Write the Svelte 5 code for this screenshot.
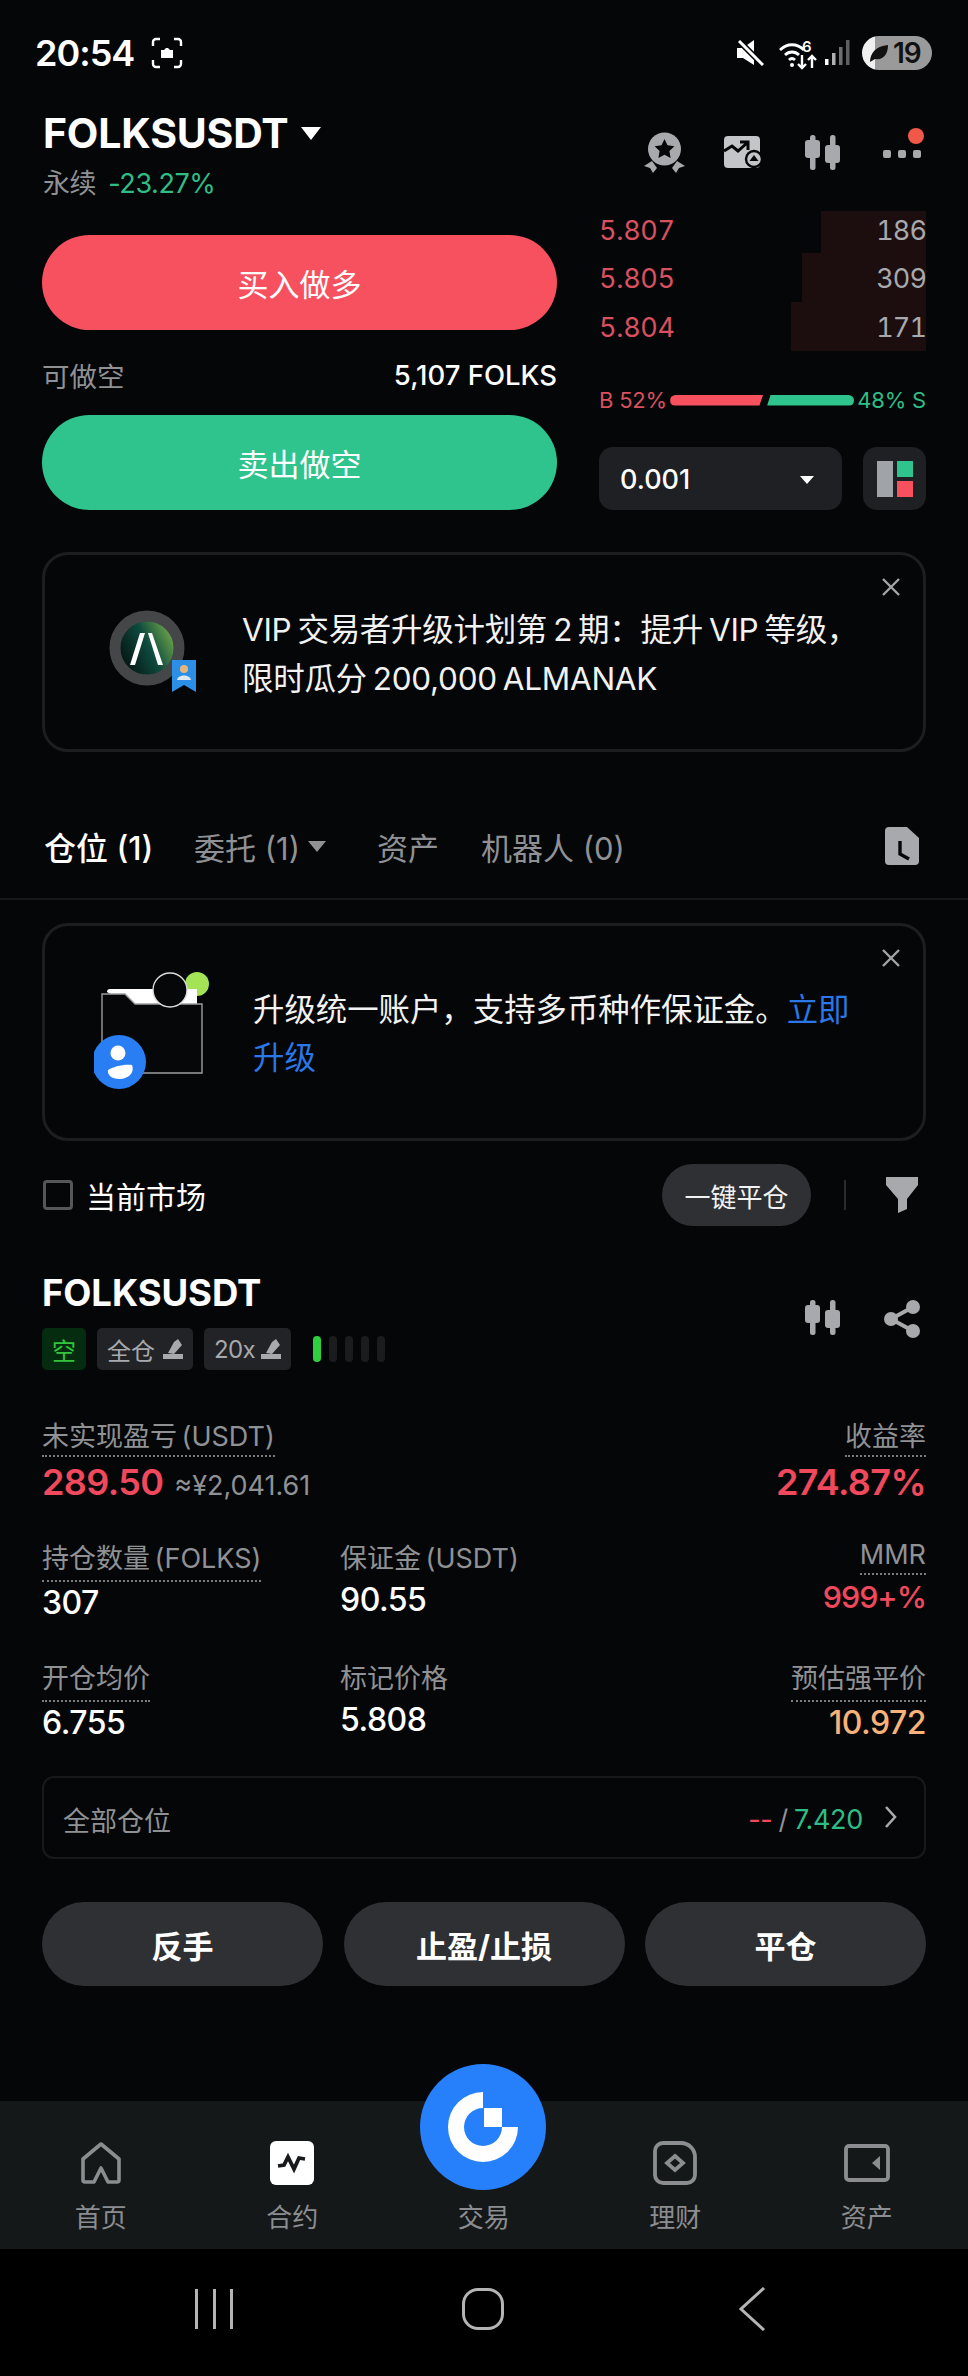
<script>
	const asks = [
		{ price: '5.807', qty: 186, width: 105 },
		{ price: '5.805', qty: 309, width: 124 },
		{ price: '5.804', qty: 171, width: 135 }
	];
	const tabs = [
		{ label: '委托 (1)', caret: true, width: 183 },
		{ label: '资产', width: 104 },
		{ label: '机器人 (0)', width: 170 }
	];
	const navItems = ['首页', '合约', '交易', '理财', '资产'];
</script>

<div class="phone">
	<div class="status">
		<span class="time">20:54</span>
		<svg viewBox="0 0 32 32" width="32" height="32" fill="none" stroke="#fff" stroke-width="2.4">
			<path d="M2 9V5a3 3 0 0 1 3-3h4M23 2h4a3 3 0 0 1 3 3v4M30 23v4a3 3 0 0 1-3 3h-4M9 30H5a3 3 0 0 1-3-3v-4" />
			<path d="M10 13h3l2-2h2l2 2h3v8H10z" fill="#fff" stroke="none" />
		</svg>
		<div class="status-right">
			<svg class="st-mute" viewBox="0 0 28 26" width="28" height="26" fill="#fff">
				<path d="M0 8h6l11-8v25L6 18H0z" />
				<path d="M2 1l24 24" stroke="#050607" stroke-width="6" />
				<path d="M2 1l24 24" stroke="#fff" stroke-width="3" />
			</svg>
			<svg class="st-wifi" viewBox="0 0 38 36" width="38" height="36" fill="none" stroke="#fff" stroke-width="2.8">
				<path d="M1 15c7-7 17-7 24 0M6 20c4-4 10-4 14 0M10 25c2-2 4-2 6 0" />
				<circle cx="13" cy="30" r="2" fill="#fff" stroke="none" />
				<path d="M23 20v13M19 29l4 4 4-4M33 33V21M29 25l4-4 4 4" stroke-width="2.4" />
				<text x="23" y="17" fill="#fff" stroke="none" font-size="15" font-weight="600" font-family="Inter, sans-serif">6</text>
			</svg>
			<svg viewBox="0 0 26 26" width="26" height="26">
				<rect x="0" y="19" width="3.5" height="6" fill="#fff" />
				<rect x="7" y="13" width="3.5" height="12" fill="#b0b0b0" />
				<rect x="14" y="7" width="3.5" height="18" fill="#6f6f6f" />
				<rect x="21" y="0" width="3.5" height="25" fill="#5f5f5f" />
			</svg>
			<div class="battery">
				<svg viewBox="0 0 20 20" width="20" height="20" fill="#111"><path d="M1 19c0-9 6-16 18-17 0 10-5 15-13 14z" /></svg>
				<span class="battery-num">19</span>
			</div>
		</div>
	</div>

	<div class="header">
		<div>
			<div class="pair">
				<span>FOLKSUSDT</span>
				<i class="caret caret--title"></i>
			</div>
			<div class="pair-sub">
				<span class="muted">永续</span>
				<span class="green">-23.27%</span>
			</div>
		</div>
		<div class="header-icons">
			<svg viewBox="0 0 41 41" width="41" height="41" fill="#a7a9ac">
				<circle cx="20.5" cy="17" r="16.5" />
				<path d="M20.5 7l3 6.3 6.9 1-5 4.8 1.2 6.9-6.1-3.3-6.1 3.3 1.2-6.9-5-4.8 6.9-1z" fill="#060708" />
				<path d="M0 34l8-5 5 7-4 5-3-5zM41 34l-8-5-5 7 4 5 3-5z" />
			</svg>
			<svg viewBox="0 0 39 32" width="39" height="32">
				<rect x="0" y="0" width="36" height="32" rx="4" fill="#c3c5c8" />
				<path d="M0 15l8-5 6 5 9-8M16 6h8v8" fill="none" stroke="#060708" stroke-width="3" />
				<circle cx="30" cy="23" r="8" fill="#c3c5c8" stroke="#060708" stroke-width="2.4" />
				<path d="M30 19l4.5 6h-9z" fill="#060708" />
			</svg>
			<svg viewBox="0 0 35 35" width="35" height="35" fill="#a7a9ac">
				<rect x="5" y="0" width="5.5" height="35" rx="2.5" />
				<rect x="25" y="0" width="5.5" height="35" rx="2.5" />
				<rect x="0" y="5" width="15" height="18" rx="3" />
				<rect x="20" y="10" width="15" height="18" rx="3" />
			</svg>
			<div class="more">
				<i></i><i></i><i></i>
				<b></b>
			</div>
		</div>
	</div>

	<div class="trade">
		<div class="trade-left">
			<button class="action action--buy">买入做多</button>
			<div class="avail">
				<span class="muted">可做空</span>
				<span class="avail-val">5,107 FOLKS</span>
			</div>
			<button class="action action--sell">卖出做空</button>
		</div>
		<div class="trade-right">
			<div class="book">
				{#each asks as ask}
					<div class="ask">
						<span class="ask-bar" style="width: {ask.width}px"></span>
						<span class="ask-price">{ask.price}</span>
						<span class="ask-qty">{ask.qty}</span>
					</div>
				{/each}
			</div>
			<div class="ratio">
				<span class="ratio-red">B 52%</span>
				<div class="ratio-bar">
					<i class="ratio-b"></i>
					<i class="ratio-s"></i>
				</div>
				<span class="green">48% S</span>
			</div>
			<div class="controls">
				<div class="select">
					<span>0.001</span>
					<i class="caret caret--small"></i>
				</div>
				<div class="layout-btn">
					<span class="lay-a"></span>
					<span class="lay-b"></span>
					<span class="lay-c"></span>
				</div>
			</div>
		</div>
	</div>

	<div class="banner banner--vip">
		<svg class="close" viewBox="0 0 18 18" width="18" height="18" stroke="#a2a4a7" stroke-width="2.4">
			<path d="M1 1l16 16M17 1L1 17" />
		</svg>
		<svg class="vip-icon" viewBox="0 0 90 82" width="90" height="82">
			<defs>
				<linearGradient id="coin" x1="0" y1="0.8" x2="1" y2="0.3">
					<stop offset="0" stop-color="#020806" />
					<stop offset="0.55" stop-color="#0e4a3e" />
					<stop offset="1" stop-color="#7fb54c" />
				</linearGradient>
			</defs>
			<circle cx="39" cy="38" r="32" fill="url(#coin)" stroke="#444648" stroke-width="11" />
			<path d="M32 23h5l-10 32h-5zM40 23h4l11 32h-5z" fill="#fff" />
			<path d="M64 50h24v32l-12-7-12 7z" fill="#2c8fe6" />
			<circle cx="76" cy="59" r="4" fill="#e8b47a" />
			<path d="M69 70c1-6 13-6 14 0z" fill="#dde8ef" />
		</svg>
		<p class="banner-text">VIP 交易者升级计划第 2 期：提升 VIP 等级，<br />限时瓜分 200,000 ALMANAK</p>
	</div>

	<div class="tabs">
		<span class="tab tab--on">仓位 (1)</span>
		{#each tabs as tab}
			<span class="tab" style="width: {tab.width}px">
				{tab.label}
				{#if tab.caret}<i class="caret caret--tab"></i>{/if}
			</span>
		{/each}
		<svg class="history" viewBox="0 0 34 38" width="34" height="38">
			<path d="M4 0h18l12 11v23a4 4 0 0 1-4 4H4a4 4 0 0 1-4-4V4a4 4 0 0 1 4-4z" fill="#a7a9ac" />
			<path d="M15 14v13l9 5" fill="none" stroke="#060708" stroke-width="3.4" />
		</svg>
	</div>

	<div class="banner banner--upgrade">
		<svg class="close" viewBox="0 0 18 18" width="18" height="18" stroke="#a2a4a7" stroke-width="2.4">
			<path d="M1 1l16 16M17 1L1 17" />
		</svg>
		<svg class="folder" viewBox="0 0 116 118" width="116" height="118">
			<circle cx="103" cy="12" r="12" fill="#a4e356" />
			<path d="M13 20a3 3 0 0 1 3-3h87v20H40z" fill="#fff" />
			<path d="M8 22h23l10 10h67v69H8z" fill="#060708" stroke="#9c9ea0" stroke-width="1.4" />
			<circle cx="76" cy="18" r="17" fill="#060708" stroke="#dcdcdc" stroke-width="1.4" />
			<circle cx="25" cy="90" r="27" fill="#2a7ef4" />
			<circle cx="24" cy="81" r="7.5" fill="#fff" />
			<path d="M14 98c5-3 15-6 24-5 3 8-4 14-13 14-7 0-12-4-11-9z" fill="#fff" />
		</svg>
		<p class="banner-text banner-text--upgrade">升级统一账户，支持多币种作保证金。<span class="link">立即</span><span class="link">升级</span></p>
	</div>

	<div class="filter">
		<label class="check">
			<i></i>
			<span>当前市场</span>
		</label>
		<button class="close-all">一键平仓</button>
		<i class="vline"></i>
		<svg viewBox="0 0 32 36" width="32" height="36" fill="#a7a9ac">
			<path d="M0 0h32v8L21 22v10l-9 4V22L0 8z" />
		</svg>
	</div>

	<div class="position">
		<div class="pos-head">
			<div>
				<div class="pos-title">FOLKSUSDT</div>
				<div class="tags">
					<span class="tag tag--short">空</span>
					<span class="tag">全仓
						<svg viewBox="0 0 20 20" width="20" height="20" fill="#a7a9ac"><path d="M11 3l4-3 4 6-8 9-6-1zM0 15h20v5H0z" /></svg>
					</span>
					<span class="tag tag--lev">20x
						<svg viewBox="0 0 20 20" width="20" height="20" fill="#a7a9ac"><path d="M11 3l4-3 4 6-8 9-6-1zM0 15h20v5H0z" /></svg>
					</span>
					<span class="risk">
						<i class="risk-on"></i><i></i><i></i><i></i><i></i>
					</span>
				</div>
			</div>
			<div class="pos-icons">
				<svg viewBox="0 0 35 35" width="35" height="35" fill="#a7a9ac">
					<rect x="5" y="0" width="5.5" height="35" rx="2.5" />
					<rect x="25" y="0" width="5.5" height="35" rx="2.5" />
					<rect x="0" y="5" width="15" height="18" rx="3" />
					<rect x="20" y="10" width="15" height="18" rx="3" />
				</svg>
				<svg viewBox="0 0 36 38" width="36" height="38" fill="#a7a9ac">
					<circle cx="29" cy="7" r="7" />
					<circle cx="7" cy="19" r="7" />
					<circle cx="29" cy="31" r="7" />
					<path d="M7 19L29 7M7 19l22 12" stroke="#a7a9ac" stroke-width="4" />
				</svg>
			</div>
		</div>

		<div class="pnl">
			<div>
				<span class="label label--dot">未实现盈亏 (USDT)</span>
				<div class="pnl-val"><b class="big red">289.50</b> <span class="approx">≈¥2,041.61</span></div>
			</div>
			<div class="right">
				<span class="label label--dot">收益率</span>
				<div class="pnl-val"><b class="big red">274.87%</b></div>
			</div>
		</div>

		<div class="stats">
			<div class="stat">
				<span class="label label--dot">持仓数量 (FOLKS)</span>
				<span class="val">307</span>
			</div>
			<div class="stat">
				<span class="label">保证金 (USDT)</span>
				<span class="val val--plain">90.55</span>
			</div>
			<div class="stat right stat--mmr">
				<span class="label label--dot">MMR</span>
				<span class="val val--mmr red">999+%</span>
			</div>
			<div class="stat">
				<span class="label label--dot">开仓均价</span>
				<span class="val">6.755</span>
			</div>
			<div class="stat">
				<span class="label">标记价格</span>
				<span class="val val--plain">5.808</span>
			</div>
			<div class="stat right">
				<span class="label label--dot">预估强平价</span>
				<span class="val orange">10.972</span>
			</div>
		</div>

		<div class="all-pos">
			<span class="muted">全部仓位</span>
			<span class="all-right">
				<span class="red">--</span> <span class="muted">/</span> <span class="green">7.420</span>
				<svg viewBox="0 0 14 22" width="14" height="22" fill="none" stroke="#a7a9ac" stroke-width="2.6"><path d="M2 1l9 10-9 10" /></svg>
			</span>
		</div>

		<div class="pos-actions">
			<button>反手</button>
			<button>止盈/止损</button>
			<button>平仓</button>
		</div>
	</div>

	<div class="nav">
		<button class="fab" aria-label="交易">
			<svg viewBox="0 0 70 70" width="70" height="70" fill="#fff">
				<path d="M35 0A35 35 0 1 0 70 35H54A19 19 0 1 1 35 16z" />
				<path d="M36 16h18v19H36z" />
			</svg>
		</button>
		{#each navItems as item, i}
			<div class="nav-item">
				<div class="nav-icon">
					{#if i === 0}
						<svg viewBox="0 0 44 44" width="44" height="44" fill="none" stroke="#8b8d90" stroke-width="3.6">
							<path d="M22 3L4 18v21a2 2 0 0 0 2 2h9l7-14 7 14h9a2 2 0 0 0 2-2V18z" stroke-linejoin="round" />
						</svg>
					{:else if i === 1}
						<svg viewBox="0 0 44 44" width="44" height="44">
							<rect x="0" y="0" width="44" height="44" rx="6" fill="#fff" />
							<path d="M8 25l6-1 4-8 6 12 5-11 6 1" fill="none" stroke="#17191b" stroke-width="3.8" />
						</svg>
					{:else if i === 3}
						<svg viewBox="0 0 44 44" width="44" height="44" fill="none" stroke="#8b8d90" stroke-width="3.8">
							<path d="M10 2h18a14 14 0 0 1 14 14v18a8 8 0 0 1-8 8H10a8 8 0 0 1-8-8V10a8 8 0 0 1 8-8z" />
							<path d="M22 15l8 7-8 7-8-7z" />
						</svg>
					{:else if i === 4}
						<svg viewBox="0 0 46 38" width="46" height="38" fill="none" stroke="#8b8d90" stroke-width="3.8">
							<rect x="2" y="2" width="42" height="34" rx="3" />
							<path d="M36 12l-8 7 8 7z" fill="#8b8d90" stroke="none" />
						</svg>
					{/if}
				</div>
				<span>{item}</span>
			</div>
		{/each}
	</div>

	<div class="sysnav">
		<div class="sys-lines"><i></i><i></i><i></i></div>
		<i class="sys-home"></i>
		<svg class="sys-back" viewBox="0 0 28 44" width="28" height="44" fill="none" stroke="#b4b4b4" stroke-width="3"><path d="M25 1L2 22l23 21" /></svg>
	</div>
</div>

<style>
	:global(body) {
		margin: 0;
		background: #050607;
	}

	.phone {
		width: 968px;
		height: 2376px;
		position: relative;
		display: flex;
		flex-direction: column;
		overflow: hidden;
		background: #050607;
		color: #fff;
		font-family: Inter, 'Noto Sans CJK SC', sans-serif;
		font-size: 28px;
	}

	button {
		border: 0;
		font-family: inherit;
		color: inherit;
		padding: 0;
	}

	i {
		display: block;
		font-style: normal;
	}

	.muted { color: #8f9194; }
	.green { color: #2fbd85; }
	.red { color: #f0485c; }
	.orange { color: #f7b27a; }
	.right { text-align: right; align-items: flex-end; }

	.caret {
		width: 0;
		height: 0;
		border-left: 10px solid transparent;
		border-right: 10px solid transparent;
		border-top: 13px solid #fff;
	}

	/* status bar */
	.status {
		height: 106px;
		flex: none;
		display: flex;
		align-items: center;
		padding: 0 36px 0 35px;
		box-sizing: border-box;
	}

	.time {
		font-size: 36px;
		font-weight: 600;
		letter-spacing: -1px;
		margin-right: 17px;
	}

	.status-right {
		margin-left: auto;
		display: flex;
		align-items: center;
		gap: 8px;
	}

	.st-wifi { margin-left: 6px; }

	.battery {
		width: 70px;
		height: 34px;
		border-radius: 17px;
		background: linear-gradient(90deg, #f0f0f0 13px, #9a9a9a 13px);
		display: flex;
		align-items: center;
		padding-left: 7px;
		box-sizing: border-box;
		margin-left: 3px;
	}

	.battery-num {
		color: #111;
		font-size: 28px;
		font-weight: 600;
		margin-left: 4px;
		letter-spacing: -1px;
	}

	/* header */
	.header {
		height: 102px;
		flex: none;
		display: flex;
		justify-content: space-between;
		padding: 3px 47px 0 43px;
		box-sizing: border-box;
	}

	.pair {
		display: flex;
		align-items: center;
		gap: 12px;
		font-size: 41px;
		font-weight: 700;
		letter-spacing: -0.2px;
		line-height: 48px;
	}

	.pair-sub {
		display: flex;
		gap: 12px;
		font-size: 27px;
		letter-spacing: -0.4px;
		line-height: 42px;
		margin-top: 6px;
	}

	.header-icons {
		display: flex;
		align-items: center;
		height: 86px;
	}

	.header-icons > :global(svg:nth-child(1)) { margin-right: 39px; }
	.header-icons > :global(svg:nth-child(2)) { margin-right: 42px; }
	.header-icons > :global(svg:nth-child(3)) { margin-right: 43px; }

	.more {
		display: flex;
		gap: 7px;
		position: relative;
		padding-top: 4px;
	}

	.more i {
		width: 8px;
		height: 8px;
		border-radius: 2px;
		background: #a7a9ac;
	}

	.more b {
		position: absolute;
		right: -3px;
		top: -18px;
		width: 16px;
		height: 16px;
		border-radius: 50%;
		background: #f0584a;
	}

	/* trade panel */
	.trade {
		flex: none;
		display: flex;
		justify-content: space-between;
		padding: 3px 42px 0;
		height: 344px;
		box-sizing: border-box;
	}

	.trade-left {
		width: 515px;
		padding-top: 24px;
		box-sizing: border-box;
	}

	.action {
		display: block;
		width: 100%;
		height: 95px;
		border-radius: 48px;
		font-size: 31px;
		color: #fff;
	}

	.action--buy { background: #f7505f; }
	.action--sell { background: #2fc48d; }

	.avail {
		height: 85px;
		display: flex;
		align-items: center;
		justify-content: space-between;
		padding-top: 4px;
		box-sizing: border-box;
		font-size: 27.5px;
	}

	.avail-val { font-weight: 500; }

	.trade-right {
		width: 327px;
	}

	.book {
		height: 140px;
	}

	.ask {
		position: relative;
		display: flex;
		align-items: center;
		justify-content: space-between;
		height: 49px;
		padding-top: 2px;
		box-sizing: border-box;
		font-size: 27px;
		font-variant-numeric: tabular-nums;
		letter-spacing: -0.3px;
	}

	.ask:first-child {
		height: 42px;
		padding: 0 0 4px;
	}

	.ask-bar {
		position: absolute;
		right: 0;
		top: 0;
		bottom: 0;
		background: #1c0e0e;
	}

	.ask-price {
		position: relative;
		color: #d9505f;
	}

	.ask-qty {
		position: relative;
		color: #a7a9ac;
		letter-spacing: -0.9px;
	}

	.ratio {
		display: flex;
		align-items: center;
		justify-content: space-between;
		height: 28px;
		margin-top: 35px;
		font-size: 22px;
		letter-spacing: -0.2px;
	}

	.ratio-red { color: #d9505f; }

	.ratio-bar {
		width: 184px;
		height: 11px;
		display: flex;
		gap: 4px;
	}

	.ratio-b {
		flex: 1.07;
		background: #f7505f;
		border-radius: 6px 0 0 6px;
		clip-path: polygon(0 0, 100% 0, 96% 100%, 0 100%);
	}

	.ratio-s {
		flex: 1;
		background: #2fc48d;
		border-radius: 0 6px 6px 0;
		clip-path: polygon(4% 0, 100% 0, 100% 100%, 0 100%);
	}

	.controls {
		display: flex;
		justify-content: space-between;
		margin-top: 33px;
	}

	.select {
		width: 243px;
		height: 63px;
		border-radius: 14px;
		background: #1e2023;
		display: flex;
		align-items: center;
		justify-content: space-between;
		padding: 2px 28px 0 21px;
		box-sizing: border-box;
		font-size: 27px;
		font-weight: 500;
	}

	.caret--small {
		border-left-width: 7px;
		border-right-width: 7px;
		border-top-width: 8px;
	}

	.layout-btn {
		width: 63px;
		height: 63px;
		border-radius: 14px;
		background: #1e2023;
		display: grid;
		grid-template-columns: 16px 16px;
		grid-template-rows: 16px 16px;
		gap: 4px;
		align-content: center;
		justify-content: center;
	}

	.lay-a { grid-row: 1 / 3; background: #a0a3a8; }
	.lay-b { background: #2fc48d; }
	.lay-c { background: #f7505f; }

	/* banners */
	.banner {
		flex: none;
		position: relative;
		display: flex;
		margin: 0 42px;
		border: 3px solid #1c1e20;
		border-radius: 26px;
		box-sizing: border-box;
	}

	.banner--vip {
		height: 200px;
		padding: 50px 0 0 63px;
	}

	.banner--upgrade {
		height: 218px;
		padding: 46px 0 0 49px;
	}

	.close {
		position: absolute;
		right: 23px;
		top: 23px;
	}

	.vip-icon {
		flex: none;
		margin-top: 5px;
	}

	.banner-text {
		margin: 0 0 0 44px;
		color: #f2f2f2;
		font-size: 31.5px;
		letter-spacing: -0.3px;
		word-spacing: -2.5px;
		line-height: 49px;
	}

	.banner-text--upgrade {
		margin: 14px 0 0 43px;
		width: 610px;
		font-size: 31.4px;
		letter-spacing: 0;
		line-height: 48px;
	}

	.folder { flex: none; }

	.link { color: #2a77e8; }

	/* tabs */
	.tabs {
		flex: none;
		height: 148px;
		margin-bottom: 23px;
		padding: 42px 49px 0 44px;
		border-bottom: 2px solid #17191b;
		box-sizing: border-box;
		display: flex;
		align-items: center;
		font-size: 31px;
		color: #8f9194;
	}

	.tab {
		display: flex;
		align-items: center;
		gap: 8px;
		white-space: nowrap;
	}

	.tab--on {
		color: #fff;
		font-weight: 500;
		font-size: 32px;
		width: 150px;
	}

	.caret--tab {
		border-left-width: 9px;
		border-right-width: 9px;
		border-top-width: 11px;
		border-top-color: #8f9194;
	}

	.history { margin-left: auto; }

	/* filter row */
	.filter {
		flex: none;
		height: 108px;
		display: flex;
		align-items: center;
		padding: 0 50px 0 43px;
	}

	.check {
		display: flex;
		align-items: center;
		gap: 13px;
		font-size: 30px;
		margin-right: auto;
	}

	.check i {
		width: 30px;
		height: 30px;
		box-sizing: border-box;
		border: 3px solid #55575a;
		border-radius: 4px;
	}

	.close-all {
		width: 149px;
		height: 62px;
		border-radius: 31px;
		background: #2e3034;
		font-size: 26px;
		color: #f2f2f2;
	}

	.vline {
		width: 2px;
		height: 30px;
		background: #2a2c2e;
		margin: 0 40px 0 33px;
	}

	/* position card */
	.position {
		flex: 1;
		padding: 0 42px;
		box-sizing: border-box;
	}

	.pos-head {
		display: flex;
		justify-content: space-between;
		padding-top: 22px;
	}

	.pos-title {
		font-size: 36.5px;
		font-weight: 700;
		letter-spacing: -0.1px;
		line-height: 44px;
	}

	.tags {
		display: flex;
		align-items: center;
		gap: 11px;
		margin-top: 13px;
	}

	.tag {
		height: 42px;
		padding: 0 10px;
		border-radius: 5px;
		background: #212326;
		color: #a7a9ac;
		display: flex;
		align-items: center;
		gap: 8px;
		font-size: 24px;
		box-sizing: border-box;
	}

	.tag--lev {
		letter-spacing: -0.6px;
		gap: 6px;
	}

	.tag--short {
		background: #062c10;
		color: #32c53c;
		padding: 0 10px;
	}

	.risk {
		display: flex;
		gap: 8px;
		margin-left: 11px;
	}

	.risk i {
		width: 8px;
		height: 26px;
		border-radius: 4px;
		background: #1a1c1e;
	}

	.risk .risk-on { background: #2fd03e; }

	.pos-icons {
		display: flex;
		gap: 44px;
		padding: 29px 6px 0 0;
	}

	.label {
		color: #8f9194;
		font-size: 27px;
		line-height: 36px;
		word-spacing: -3px;
		display: inline-block;
		vertical-align: top;
	}

	.label--dot {
		border-bottom: 2px dotted #7a7c7f;
	}

	.pnl {
		display: flex;
		justify-content: space-between;
		margin-top: 49px;
	}

	.pnl-val {
		line-height: 44px;
		margin-top: 3px;
	}

	.big {
		font-size: 36px;
		font-weight: 600;
		letter-spacing: -0.6px;
	}

	.approx {
		color: #8f9194;
		font-size: 27px;
		margin-left: 3px;
	}

	.stats {
		display: grid;
		grid-template-columns: 298px 1fr auto;
		grid-template-rows: 120px 115px;
		margin-top: 33px;
	}

	.stat {
		display: flex;
		flex-direction: column;
		align-items: flex-start;
	}

	.stat .label--dot { padding-bottom: 3px; }

	.stat.right { align-items: flex-end; }

	.stat--mmr { margin-top: -4px; }

	.stat.stat--mmr .label--dot { padding-bottom: 0; }

	.val {
		font-size: 32px;
		font-weight: 500;
		letter-spacing: -0.5px;
		line-height: 42px;
	}

	.val--plain { margin-top: 2px; }

	.val--mmr {
		margin-top: 1px;
		font-size: 30.5px;
		letter-spacing: -1px;
	}

	.all-pos {
		height: 83px;
		border: 2px solid #17191b;
		border-radius: 12px;
		box-sizing: border-box;
		display: flex;
		align-items: center;
		justify-content: space-between;
		padding: 4px 26px 0 19px;
		font-size: 27px;
	}

	.all-right {
		display: flex;
		align-items: center;
		gap: 6px;
		letter-spacing: -0.3px;
	}

	.all-right svg {
		margin: -6px 0 0 15px;
	}

	.pos-actions {
		display: flex;
		justify-content: space-between;
		margin-top: 43px;
	}

	.pos-actions button {
		width: 281px;
		height: 84px;
		border-radius: 42px;
		background: #2e3034;
		font-size: 31px;
		font-weight: 700;
		color: #fff;
	}

	/* bottom nav */
	.nav {
		flex: none;
		height: 148px;
		position: relative;
		display: grid;
		grid-template-columns: repeat(5, 191.5px);
		padding-left: 5px;
		background: #151819;
	}

	.fab {
		position: absolute;
		left: 420px;
		top: -37px;
		width: 126px;
		height: 126px;
		border-radius: 50%;
		background: #2680fb;
		display: flex;
		align-items: center;
		justify-content: center;
	}

	.nav-item {
		display: flex;
		flex-direction: column;
		align-items: center;
		font-size: 26px;
		color: #8b8d90;
	}

	.nav-icon {
		height: 44px;
		margin-top: 40px;
		margin-bottom: 12px;
		display: flex;
		align-items: center;
	}

	/* android nav */
	.sysnav {
		flex: none;
		height: 127px;
		background: #000;
		display: flex;
		align-items: center;
		padding: 0 0 7px 195px;
		box-sizing: border-box;
	}

	.sys-lines {
		display: flex;
		gap: 14.5px;
	}

	.sys-lines i {
		width: 3px;
		height: 40px;
		background: #b4b4b4;
	}

	.sys-home {
		width: 42px;
		height: 42px;
		box-sizing: border-box;
		border: 3.5px solid #b4b4b4;
		border-radius: 16px;
		margin-left: 229px;
	}

	.sys-back { margin-left: 235px; }
</style>
